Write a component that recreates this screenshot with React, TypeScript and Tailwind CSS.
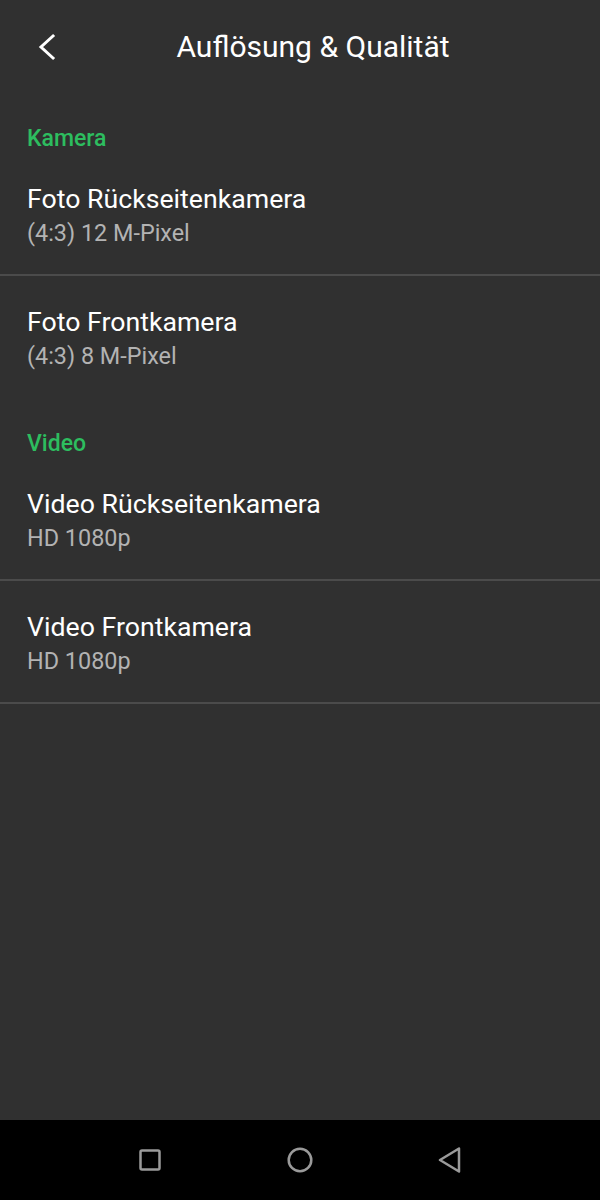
const items = [
  {
    section: "Kamera",
    rows: [
      { title: "Foto Rückseitenkamera", sub: "(4:3) 12 M-Pixel", divider: true },
      { title: "Foto Frontkamera", sub: "(4:3) 8 M-Pixel", divider: false },
    ],
  },
  {
    section: "Video",
    rows: [
      { title: "Video Rückseitenkamera", sub: "HD 1080p", divider: true },
      { title: "Video Frontkamera", sub: "HD 1080p", divider: true },
    ],
  },
];

export default function App() {
  return (
    <div
      className="flex h-[1200px] w-[600px] flex-col bg-[#303030] text-white"
      style={{ fontFamily: "Roboto, 'Noto Sans', sans-serif" }}
    >
      {/* toolbar */}
      <div className="relative flex h-[94px] shrink-0 items-center justify-center">
        <svg className="absolute left-[33px] top-[29px]" width="28" height="36" viewBox="0 0 28 36" fill="none">
          <path d="M20 7 L8 18 L20 29" stroke="#fff" strokeWidth="3" strokeLinecap="square" />
        </svg>
        <span className="pl-[26px] text-[30px] leading-[34px]">Auflösung &amp; Qualität</span>
      </div>

      <div className="flex-1">
        {items.map((s) => (
          <div key={s.section}>
            <div className="px-[27px] pb-[2px] pt-[33px] text-[23px] font-medium leading-[24px] text-[#2dbd5f]">{s.section}</div>
            {s.rows.map((r) => (
              <div
                key={r.title}
                className={
                  "box-border h-[123px] border-b-2 px-[27px] pt-[30px] " +
                  (r.divider ? "border-[#4b4b4b]" : "border-transparent")
                }
              >
                <div className="text-[26.7px] leading-[33px] text-white">{r.title}</div>
                <div className="text-[23.4px] leading-[34px] text-[#b3b3b3]">{r.sub}</div>
              </div>
            ))}
          </div>
        ))}
      </div>

      {/* nav bar */}
      <div className="flex h-[80px] shrink-0 items-center justify-center bg-black">
        <div className="flex w-[150px] justify-center">
          <svg width="22" height="22" viewBox="0 0 22 22" fill="none">
            <rect x="1.5" y="1.5" width="19" height="19" rx="1.5" stroke="#9a9a9a" strokeWidth="2.5" />
          </svg>
        </div>
        <div className="flex w-[150px] justify-center">
          <svg width="26" height="26" viewBox="0 0 26 26" fill="none">
            <circle cx="13" cy="13" r="11.3" stroke="#9a9a9a" strokeWidth="2.5" />
          </svg>
        </div>
        <div className="flex w-[150px] justify-center">
          <svg width="24" height="26" viewBox="0 0 24 26" fill="none">
            <path d="M21 1.5 L2 13 L21 24.5 Z" stroke="#9a9a9a" strokeWidth="2.5" strokeLinejoin="round" />
          </svg>
        </div>
      </div>
    </div>
  );
}
